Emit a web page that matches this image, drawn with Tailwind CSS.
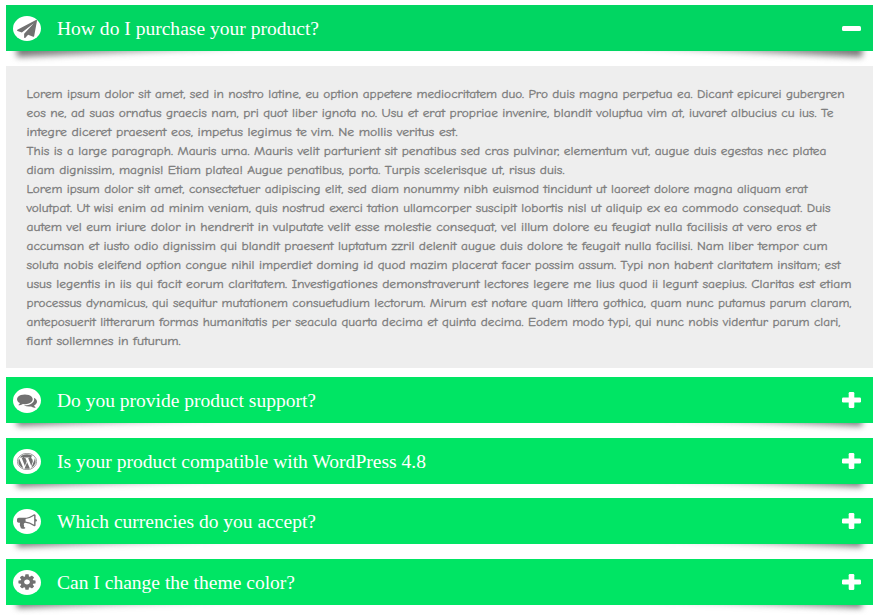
<!DOCTYPE html>
<html lang="en">
<head>
<meta charset="utf-8">
<title>FAQ</title>
<script src="https://cdn.jsdelivr.net/npm/@tailwindcss/browser@4"></script>
</head>
<body class="bg-white w-[880px] h-[615px] overflow-hidden">
<svg class="hidden"><symbol id="plus" viewBox="0 0 19 16"><rect y="5.500" width="19" height="5" rx="1.200"/><rect x="6.700" width="5.600" height="16" rx="1.200"/></symbol></svg>
<main class="isolate pl-[6px] pt-[5px] w-[873px]">
  <section class="relative h-[46px] mb-[15px]">
    <i class="absolute -z-10 left-[11px] bottom-[-6px] w-[300px] h-[14px] origin-bottom-left -rotate-[2.3deg] bg-linear-to-r from-[#777] to-[#777]/10 blur-[3px]"></i>
    <i class="absolute -z-10 right-[11px] bottom-[-6px] w-[300px] h-[14px] origin-bottom-right rotate-[2.3deg] bg-linear-to-l from-[#777] to-[#777]/10 blur-[3px]"></i>
    <div class="h-full bg-[#01d662] flex items-center pl-[7px] pr-[12px]">
      <span class="w-[28px] h-[25px] mt-px rounded-[50%] bg-white flex items-center justify-center shrink-0"><svg class="w-[20px] h-[18px]" viewBox="0 0 1792 1792" preserveAspectRatio="none" fill="#717171"><path d="M1764 11q33 24 27 64l-256 1536q-5 29-32 45-14 8-31 8-11 0-24-5l-453-185-242 295q-18 23-49 23-13 0-22-4-19-7-30.500-23.500t-11.500-36.500v-349l864-1059-1069 925-395-162q-37-14-40-55-2-40 32-59l1664-960q15-9 32-9 20 0 36 11z"/></svg></span>
      <h3 class="ml-[16px] flex-1 text-[18px] font-['Liberation_Serif',serif]"><svg class="block w-full h-[24px]" fill="#fff"><text y="18.500" textLength="262" lengthAdjust="spacingAndGlyphs">How do I purchase your product?</text></svg></h3>
      <b class="w-[19px] h-[5px] mt-px rounded-[1.5px] bg-white"></b>
    </div>
  </section>
  <article class="h-[302px] mb-[9px] bg-[#eee] pl-[20px] pt-[18px] text-[12px] font-['Comic_Sans_MS','Comic_Neue',Lato,sans-serif]">
    <svg class="block w-[840px] h-[270px] fill-[#7c7c7c] stroke-[#7c7c7c] stroke-[0.3px]">
      <text x=".5" y="13.500" textLength="818" lengthAdjust="spacingAndGlyphs">Lorem ipsum dolor sit amet, sed in nostro latine, eu option appetere mediocritatem duo. Pro duis magna perpetua ea. Dicant epicurei gubergren</text>
      <text x=".5" y="32.500" textLength="807" lengthAdjust="spacingAndGlyphs">eos ne, ad suas ornatus graecis nam, pri quot liber ignota no. Usu et erat propriae invenire, blandit voluptua vim at, iuvaret albucius cu ius. Te</text>
      <text x=".5" y="51.500" textLength="431" lengthAdjust="spacingAndGlyphs">integre diceret praesent eos, impetus legimus te vim. Ne mollis veritus est.</text>
      <text x=".5" y="70.500" textLength="800" lengthAdjust="spacingAndGlyphs">This is a large paragraph. Mauris urna. Mauris velit parturient sit penatibus sed cras pulvinar, elementum vut, augue duis egestas nec platea</text>
      <text x=".5" y="89.500" textLength="538" lengthAdjust="spacingAndGlyphs">diam dignissim, magnis! Etiam platea! Augue penatibus, porta. Turpis scelerisque ut, risus duis.</text>
      <text x=".5" y="108.500" textLength="781" lengthAdjust="spacingAndGlyphs">Lorem ipsum dolor sit amet, consectetuer adipiscing elit, sed diam nonummy nibh euismod tincidunt ut laoreet dolore magna aliquam erat</text>
      <text x=".5" y="127.500" textLength="804" lengthAdjust="spacingAndGlyphs">volutpat. Ut wisi enim ad minim veniam, quis nostrud exerci tation ullamcorper suscipit lobortis nisl ut aliquip ex ea commodo consequat. Duis</text>
      <text x=".5" y="146.500" textLength="790" lengthAdjust="spacingAndGlyphs">autem vel eum iriure dolor in hendrerit in vulputate velit esse molestie consequat, vel illum dolore eu feugiat nulla facilisis at vero eros et</text>
      <text x=".5" y="165.500" textLength="801" lengthAdjust="spacingAndGlyphs">accumsan et iusto odio dignissim qui blandit praesent luptatum zzril delenit augue duis dolore te feugait nulla facilisi. Nam liber tempor cum</text>
      <text x=".5" y="184.500" textLength="814" lengthAdjust="spacingAndGlyphs">soluta nobis eleifend option congue nihil imperdiet doming id quod mazim placerat facer possim assum. Typi non habent claritatem insitam; est</text>
      <text x=".5" y="203.500" textLength="825" lengthAdjust="spacingAndGlyphs">usus legentis in iis qui facit eorum claritatem. Investigationes demonstraverunt lectores legere me lius quod ii legunt saepius. Claritas est etiam</text>
      <text x=".5" y="222.500" textLength="825" lengthAdjust="spacingAndGlyphs">processus dynamicus, qui sequitur mutationem consuetudium lectorum. Mirum est notare quam littera gothica, quam nunc putamus parum claram,</text>
      <text x=".5" y="241.500" textLength="814" lengthAdjust="spacingAndGlyphs">anteposuerit litterarum formas humanitatis per seacula quarta decima et quinta decima. Eodem modo typi, qui nunc nobis videntur parum clari,</text>
      <text x=".5" y="260.500" textLength="154" lengthAdjust="spacingAndGlyphs">fiant sollemnes in futurum.</text>
    </svg>
  </article>
  <div class="flex flex-col gap-[14.67px]">
  <section class="relative h-[46px]">
    <i class="absolute -z-10 left-[11px] bottom-[-3px] w-[280px] h-[14px] origin-bottom-left -rotate-[2deg] bg-linear-to-r from-[#777] to-[#777]/10 blur-[3px]"></i>
    <i class="absolute -z-10 right-[11px] bottom-[-3px] w-[280px] h-[14px] origin-bottom-right rotate-[2deg] bg-linear-to-l from-[#777] to-[#777]/10 blur-[3px]"></i>
    <div class="h-full bg-[#00e564] flex items-center pl-[7px] pr-[12px]">
      <span class="w-[28px] h-[25px] mt-px rounded-[50%] bg-white flex items-center justify-center shrink-0"><svg class="w-[20px] h-[17px]" viewBox="0 0 1792 1792" preserveAspectRatio="none" fill="#717171"><path d="M1408 768q0 139-94 257t-256.500 186.500-353.500 68.500q-86 0-176-16-124 88-278 128-36 9-86 16h-3q-11 0-20.500-8t-11.500-21q-1-3-1-6.500t.5-6.500 2-6l2.500-5 3.500-5.500 4-5 4.500-5 4-4.500q5-6 23-25t26-29.500 22.500-29 25-38.500 20.500-44q-124-72-195-177t-71-224q0-139 94-257t256.500-186.500 353.500-68.500 353.500 68.500 256.500 186.500 94 257zm384 256q0 120-71 224.500t-195 176.500q10 24 20.500 44t25 38.500 22.500 29 26 29.500 23 25q1 1 4 4.500t4.500 5 4 5 3.500 5.500l2.500 5 2 6 .5 6.500-1 6.500q-3 14-13 22t-22 7q-50-7-86-16-154-40-278-128-90 16-176 16-271 0-472-132 58 4 88 4 161 0 309-45t264-129q125-92 192-212t67-254q0-77-23-152 129 71 204 178t75 230z"/></svg></span>
      <h3 class="ml-[16px] flex-1 text-[18px] font-['Liberation_Serif',serif]"><svg class="block w-full h-[24px]" fill="#fff"><text y="18.500" textLength="259" lengthAdjust="spacingAndGlyphs">Do you provide product support?</text></svg></h3>
      <svg class="w-[19px] h-[16px] fill-white"><use href="#plus"/></svg>
    </div>
  </section>
  <section class="relative h-[46px]">
    <i class="absolute -z-10 left-[11px] bottom-[-3px] w-[280px] h-[14px] origin-bottom-left -rotate-[2deg] bg-linear-to-r from-[#777] to-[#777]/10 blur-[3px]"></i>
    <i class="absolute -z-10 right-[11px] bottom-[-3px] w-[280px] h-[14px] origin-bottom-right rotate-[2deg] bg-linear-to-l from-[#777] to-[#777]/10 blur-[3px]"></i>
    <div class="h-full bg-[#00e564] flex items-center pl-[7px] pr-[12px]">
      <span class="w-[28px] h-[25px] mt-px rounded-[50%] bg-white flex items-center justify-center shrink-0"><svg class="w-[20px] h-[17px]" viewBox="0 0 16 16" preserveAspectRatio="none" fill="#717171"><path d="M12.633 7.653c0-.848-.305-1.435-.566-1.892l-.08-.13c-.317-.51-.594-.958-.594-1.480 0-.63.478-1.218 1.152-1.218q.03 0 .058.003l.031.003A6.840 6.840 0 0 0 8 1.137 6.860 6.860 0 0 0 2.266 4.230c.16.005.313.009.442.009.717 0 1.828-.087 1.828-.087.370-.022.414.521.044.565 0 0-.371.044-.785.065l2.500 7.434 1.500-4.506-1.070-2.929c-.369-.022-.719-.065-.719-.065-.370-.022-.326-.588.043-.566 0 0 1.134.087 1.808.087.718 0 1.830-.087 1.830-.087.370-.022.413.522.043.566 0 0-.372.043-.785.065l2.480 7.377.684-2.287.054-.173c.270-.860.469-1.495.469-2.046zM1.137 8a6.860 6.860 0 0 0 3.868 6.176L1.730 5.206A6.800 6.800 0 0 0 1.137 8zM6.061 14.583L8.121 8.600l2.109 5.784q.020.050.049.094a6.850 6.850 0 0 1-4.218.109zM14.020 4.710q.046.328.047.706c0 .696-.130 1.479-.522 2.458l-2.096 6.060a6.860 6.860 0 0 0 2.572-9.224z"/><circle cx="8" cy="8" r="7.700" fill="none" stroke="#717171" stroke-width=".6"/></svg></span>
      <h3 class="ml-[16px] flex-1 text-[18px] font-['Liberation_Serif',serif]"><svg class="block w-full h-[24px]" fill="#fff"><text y="18.500" textLength="369" lengthAdjust="spacingAndGlyphs">Is your product compatible with WordPress 4.8</text></svg></h3>
      <svg class="w-[19px] h-[16px] fill-white"><use href="#plus"/></svg>
    </div>
  </section>
  <section class="relative h-[46px]">
    <i class="absolute -z-10 left-[11px] bottom-[-3px] w-[280px] h-[14px] origin-bottom-left -rotate-[2deg] bg-linear-to-r from-[#777] to-[#777]/10 blur-[3px]"></i>
    <i class="absolute -z-10 right-[11px] bottom-[-3px] w-[280px] h-[14px] origin-bottom-right rotate-[2deg] bg-linear-to-l from-[#777] to-[#777]/10 blur-[3px]"></i>
    <div class="h-full bg-[#00e564] flex items-center pl-[7px] pr-[12px]">
      <span class="w-[28px] h-[25px] mt-px rounded-[50%] bg-white flex items-center justify-center shrink-0"><svg class="w-[20px] h-[17px]" viewBox="0 0 1792 1792" preserveAspectRatio="none" fill="#717171"><path d="M1664 640q53 0 90.500 37.500t37.500 90.500-37.500 90.500-90.500 37.500v384q0 52-38 90t-90 38q-417-347-812-380-58 19-91 66t-31 100.500 40 92.500q-20 33-23 65.500t6 58 33.500 55 48 50 61.500 50.500q-29 58-111.500 83t-168.500 11.500-132-55.500q-7-23-29.500-87.500t-32-94.500-23-89-15-101 3.500-98.500 22-110.500h-122q-66 0-113-47t-47-113v-192q0-66 47-113t113-47h480q435 0 896-384 52 0 90 38t38 90v384zm-128 604v-954q-394 302-768 343v270q377 42 768 341z"/></svg></span>
      <h3 class="ml-[16px] flex-1 text-[18px] font-['Liberation_Serif',serif]"><svg class="block w-full h-[24px]" fill="#fff"><text y="18.500" textLength="259" lengthAdjust="spacingAndGlyphs">Which currencies do you accept?</text></svg></h3>
      <svg class="w-[19px] h-[16px] fill-white"><use href="#plus"/></svg>
    </div>
  </section>
  <section class="relative h-[46px]">
    <i class="absolute -z-10 left-[11px] bottom-[-3px] w-[280px] h-[14px] origin-bottom-left -rotate-[2deg] bg-linear-to-r from-[#777] to-[#777]/10 blur-[3px]"></i>
    <i class="absolute -z-10 right-[11px] bottom-[-3px] w-[280px] h-[14px] origin-bottom-right rotate-[2deg] bg-linear-to-l from-[#777] to-[#777]/10 blur-[3px]"></i>
    <div class="h-full bg-[#00e564] flex items-center pl-[7px] pr-[12px]">
      <span class="w-[28px] h-[25px] mt-px rounded-[50%] bg-white flex items-center justify-center shrink-0"><svg class="w-[20px] h-[18px]" viewBox="0 0 1792 1792" preserveAspectRatio="none" fill="#717171"><path d="M1152 896q0-106-75-181t-181-75-181 75-75 181 75 181 181 75 181-75 75-181zm512-109v222q0 12-8 23t-20 13l-185 28q-19 54-39 91 35 50 107 138 10 12 10 25t-9 23q-27 37-99 108t-94 71q-12 0-26-9l-138-108q-44 23-91 38-16 136-29 186-7 28-36 28h-222q-14 0-24.500-8.500t-11.500-21.500l-28-184q-49-16-90-37l-141 107q-10 9-25 9-14 0-25-11-126-114-165-168-7-10-7-23 0-12 8-23 15-21 51-66.500t54-70.500q-27-50-41-99l-183-27q-13-2-21-12.500t-8-23.500v-222q0-12 8-23t19-13l186-28q14-46 39-92-40-57-107-138-10-12-10-24 0-10 9-23 26-36 98.500-107.500t94.500-71.500q13 0 26 10l138 107q44-23 91-38 16-136 29-186 7-28 36-28h222q14 0 24.500 8.500t11.500 21.500l28 184q49 16 90 37l142-107q9-9 24-9 13 0 25 10 129 119 165 170 7 8 7 22 0 12-8 23-15 21-51 66.500t-54 70.500q26 50 41 98l183 28q13 2 21 12.500t8 23.500z"/></svg></span>
      <h3 class="ml-[16px] flex-1 text-[18px] font-['Liberation_Serif',serif]"><svg class="block w-full h-[24px]" fill="#fff"><text y="18.500" textLength="238" lengthAdjust="spacingAndGlyphs">Can I change the theme color?</text></svg></h3>
      <svg class="w-[19px] h-[16px] fill-white"><use href="#plus"/></svg>
    </div>
  </section>
  </div>
</main>
</body>
</html>
